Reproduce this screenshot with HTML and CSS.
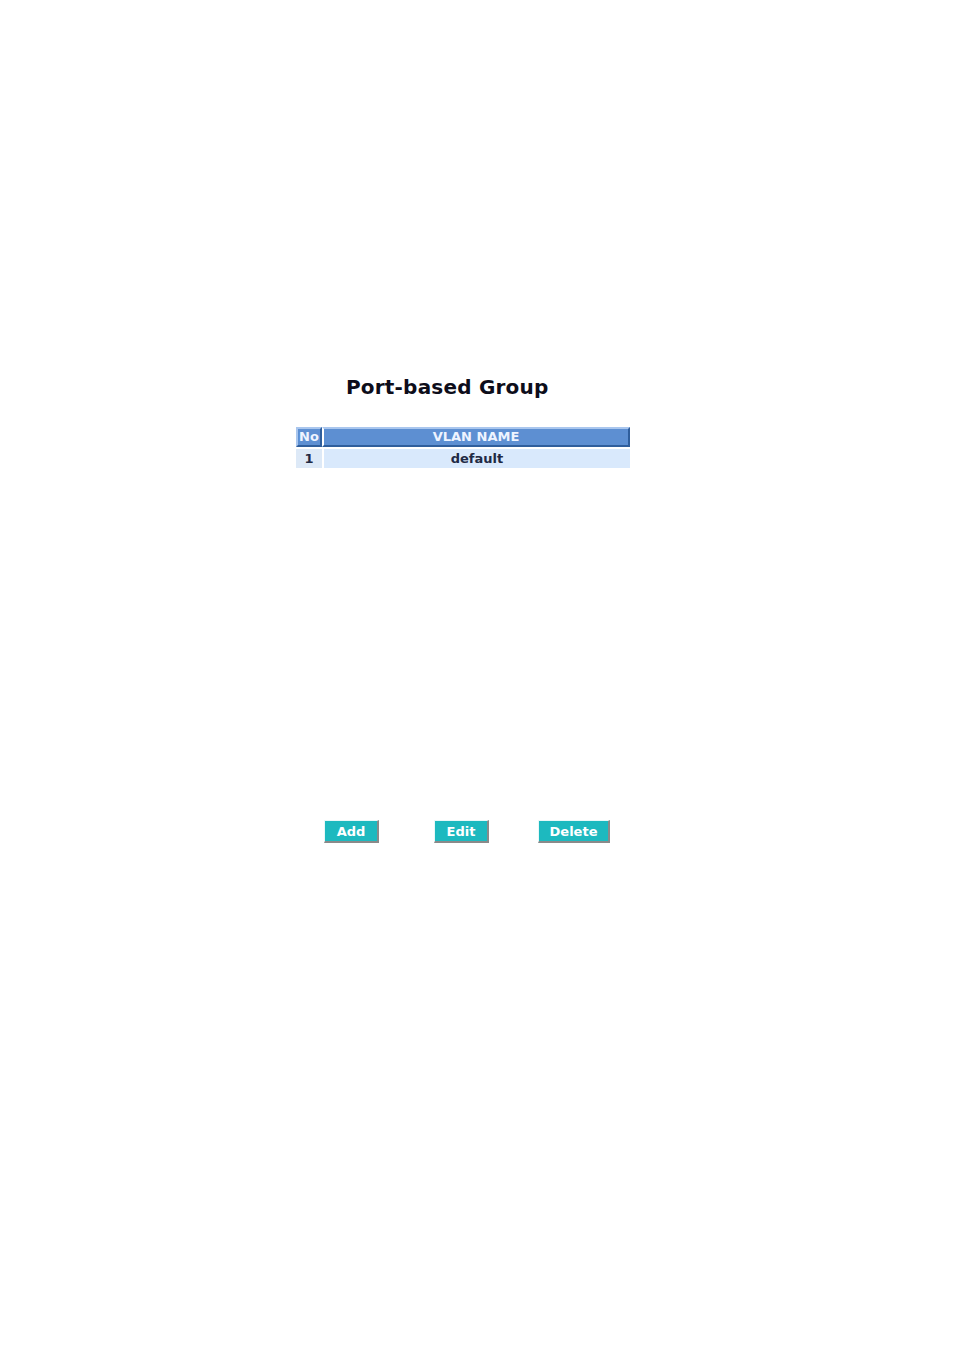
FILE: index.html
```html
<!DOCTYPE html>
<html>
<head>
<meta charset="utf-8">
<link rel="stylesheet" href="styles.css">
</head>
<body>
<div class="page">
  <h1 class="title">Port-based Group</h1>
  <table class="vlan">
    <thead>
      <tr><th class="no">No</th><th class="name">VLAN NAME</th></tr>
    </thead>
    <tbody>
      <tr><td class="no">1</td><td class="name">default</td></tr>
    </tbody>
  </table>
  <div class="buttons">
    <button class="btn btn-add">Add</button>
    <button class="btn btn-edit">Edit</button>
    <button class="btn btn-delete">Delete</button>
  </div>
</div>
</body>
</html>
```

FILE: styles.css
```css
html, body {
  margin: 0;
  padding: 0;
  background: #ffffff;
}
body {
  font-family: "DejaVu Sans", Verdana, sans-serif;
  color: #1a1a2e;
}
.page {
  padding: 374px 0 0 296px;
  width: 334px;
}
.title {
  margin: 0 0 0 50px;
  font-size: 20px;
  line-height: 26px;
  font-weight: bold;
  letter-spacing: 0.2px;
  color: #0d0d1a;
  white-space: nowrap;
}
.vlan {
  margin-top: 25px;
  width: 334px;
  border-collapse: separate;
  border-spacing: 0 2px;
  font-size: 13px;
  font-weight: bold;
}
.vlan th {
  background: #5d8fd2;
  color: #eef4ff;
  height: 16px;
  padding: 0;
  border-top: 2px solid #a9c6ee;
  border-left: 2px solid #a9c6ee;
  border-bottom: 2px solid #2f5e9c;
  border-right: 2px solid #2f5e9c;
  line-height: 16px;
}
.vlan th.no {
  width: 22px;
}
.vlan td {
  background: #d9e9fc;
  color: #1f2a44;
  height: 19px;
  padding: 0;
  text-align: center;
  line-height: 19px;
}
.vlan td.no {
  background: #dde9f7;
}
.vlan th.no + th, .vlan td.no + td {
  border-left: 2px solid #ffffff;
}
.buttons {
  margin-top: 350px;
  display: flex;
  padding-left: 28px;
}
.btn {
  font-family: "DejaVu Sans", Verdana, sans-serif;
  font-size: 13px;
  font-weight: bold;
  color: #ffffff;
  background: #1db9bf;
  height: 23px;
  padding: 0;
  border-top: 1px solid #e8f8f8;
  border-left: 1px solid #e8f8f8;
  border-right: 2px solid #8a8a8a;
  border-bottom: 2px solid #8a8a8a;
  line-height: 19px;
}
.btn-add { width: 55px; }
.btn-edit { width: 55px; margin-left: 55px; }
.btn-delete { width: 72px; margin-left: 49px; }
```
